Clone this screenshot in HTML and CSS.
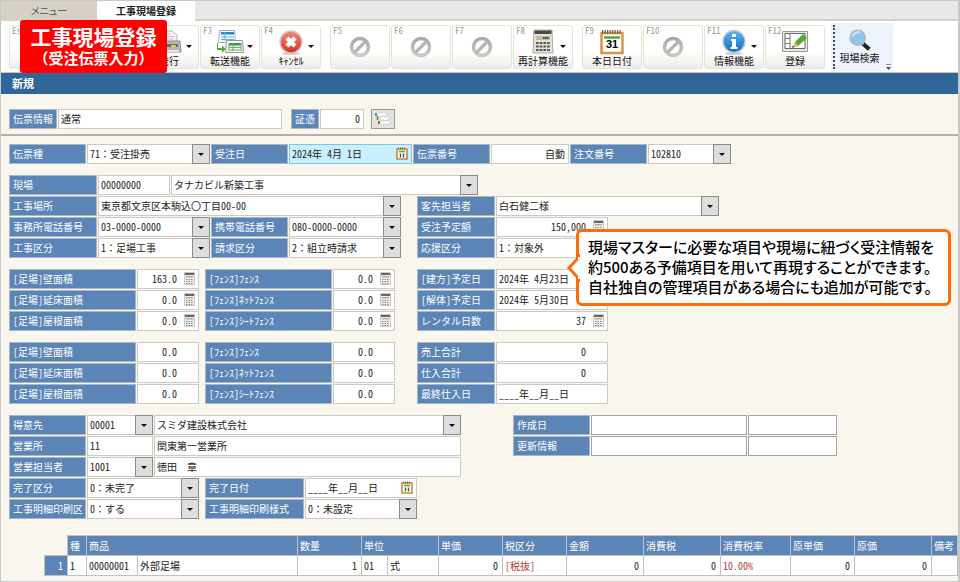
FILE: index.html
```html
<!DOCTYPE html>
<html lang="ja">
<head>
	<meta charset="UTF-8">
	<title>工事現場登録</title>
	<link rel="stylesheet" href="styles.css">
</head>
<body>
<svg class="defs">
	<defs>
		<linearGradient id="g-ban" x1="0" y1="0" x2="0" y2="1"><stop offset="0" stop-color="#a9a9a9"/><stop offset="1" stop-color="#c9c9c9"/></linearGradient>
		<linearGradient id="g-red" x1="0" y1="0" x2="0" y2="1"><stop offset="0" stop-color="#f58a7c"/><stop offset="1" stop-color="#d9301f"/></linearGradient>
		<linearGradient id="g-blue" x1="0" y1="0" x2="0" y2="1"><stop offset="0" stop-color="#5db4ee"/><stop offset="1" stop-color="#1c66bd"/></linearGradient>
	</defs>
	<symbol id="ban" viewBox="0 0 22 22">
		<circle cx="11" cy="11" r="8.5" fill="none" stroke="url(#g-ban)" stroke-width="3.6"/>
		<path d="M5.5 16.5l11-11" stroke="#b5b5b5" stroke-width="3.2"/>
	</symbol>
	<symbol id="calc" viewBox="0 0 11 13">
		<path d="M.5.5h10v12H.5z" fill="#f0efec" stroke="#c9c7c2"/>
		<path d="M1 1h9v2H1z" fill="#666"/>
		<path d="M2 4h7v1.500H2z" fill="#b8ad96"/>
		<path d="M2 7.500h7M2 9.500h7M2 11.500h7" stroke="#888" stroke-dasharray="1.500 1"/>
	</symbol>
	<symbol id="cal" viewBox="0 0 12 13">
		<path d="M1 2h10v10H1z" fill="#fffdf5" stroke="#c8883e" stroke-width="1.600"/>
		<path d="M2 1.500h8" stroke="#7a5a38" stroke-width="2" stroke-dasharray="1 1"/>
		<path d="M3 4.500h6" stroke="#4fae2f" stroke-width="1.600"/>
		<path d="M4.500 6.500v4M7.500 6.500v4" stroke="#555" stroke-width="1.400"/>
	</symbol>
</svg>

<div class="window">
	<div class="tabs">
		<button class="tab">メニュー</button>
		<button class="tab active">工事現場登録</button>
	</div>

	<div class="toolbar">
		<button class="tool"><span class="key">Esc</span></button>
		<button class="tool group" aria-label="F1"></button>
		<button class="tool drop">
			<svg width="26" height="26" viewBox="0 0 26 26"><path d="M6 2h10l5 4v8H6z" fill="#f4f4f4" stroke="#b5b5b5"/><path d="M9 5h6M9 7.500h9M9 10h9" stroke="#c5c5c5"/><path d="M2 12h22l1 11H1z" fill="#b9b9b9" stroke="#8c8c8c"/><path d="M4 15h18v3H4z" fill="#686868"/><path d="M15 17h5" stroke="#e6cf3d" stroke-width="2"/><path d="M3 21h20v2H3z" fill="#e3e3e3"/></svg>
			<span class="cap">発行</span></button>
		<button class="tool drop"><span class="key">F3</span>
			<svg width="28" height="26" viewBox="0 0 28 26"><path d="M3.500 1.500h15l1 12h-17z" fill="#fff" stroke="#8fb0c9"/><path d="M5 3h13v2.500H5z" fill="#2c85c9"/><path d="M5 8h13M5 10.500h13M9 3v9" stroke="#65a8d8"/><path d="M10.500 11.500h16l1 12h-18z" fill="#f5f5f5" stroke="#999"/><path d="M13 14h12v2.500H13z" fill="#3b9d42"/><path d="M13 18.500h12M13 21h12M17 14v8M25 14v8M13 14v8" stroke="#63b567"/><path d="M2 14v5h4v-2.500l4 3.500-4 3.500V21H1v-7z" fill="#4eae2e"/></svg>
			<span class="cap">転送機能</span></button>
		<button class="tool drop"><span class="key">F4</span>
			<svg width="26" height="26" viewBox="0 0 26 26"><ellipse cx="13" cy="24.500" rx="9" ry="1.500" fill="#ccc"/><circle cx="13" cy="13" r="11" fill="url(#g-red)" stroke="#ccc" stroke-width="1.500"/><path d="M9 9l8 8M17 9l-8 8" stroke="#fff" stroke-width="4.500"/></svg>
			<span class="cap">ｷｬﾝｾﾙ</span></button>

		<button class="tool group off"><span class="key">F5</span><svg width="22" height="22"><use href="#ban"/></svg></button>
		<button class="tool off"><span class="key">F6</span><svg width="22" height="22"><use href="#ban"/></svg></button>
		<button class="tool off"><span class="key">F7</span><svg width="22" height="22"><use href="#ban"/></svg></button>
		<button class="tool drop"><span class="key">F8</span>
			<svg width="22" height="26" viewBox="0 0 22 26"><path d="M2 1h18l1 23H1z" fill="#e4e2de" stroke="#aaa"/><path d="M2.500 1.500h17v3.500h-17z" fill="#4a4a4a"/><path d="M4 7h14v4H4z" fill="#c4b799"/><path d="M11 9h6" stroke="#444" stroke-width="2" stroke-dasharray="1.500 .5"/><path d="M4 14h14M4 17.500h14M4 21h14" stroke="#555" stroke-width="2.200" stroke-dasharray="2.700 1"/></svg>
			<span class="cap">再計算機能</span></button>

		<button class="tool group"><span class="key">F9</span>
			<svg width="26" height="26" viewBox="0 0 26 26"><path d="M2.500 4h21v20h-21z" fill="#fff" stroke="#d9954a" stroke-width="2.500"/><path d="M3 3h20" stroke="#7b5937" stroke-width="4" stroke-dasharray="1.200 1.300"/><path d="M5 8.500h16" stroke="#4faa2c" stroke-width="2.500"/><text x="13" y="19" class="day">31</text></svg>
			<span class="cap">本日日付</span></button>
		<button class="tool off"><span class="key">F10</span><svg width="22" height="22"><use href="#ban"/></svg></button>
		<button class="tool drop"><span class="key">F11</span>
			<svg width="26" height="26" viewBox="0 0 26 26"><ellipse cx="13" cy="24.500" rx="9" ry="1.500" fill="#ccc"/><circle cx="13" cy="12.500" r="11" fill="url(#g-blue)" stroke="#bcc9d3" stroke-width="1.500"/><path d="M11 5h4v3h-4zM10 10h5v8h1.500v2h-7v-2H11v-6h-1z" fill="#fff"/></svg>
			<span class="cap">情報機能</span></button>
		<button class="tool"><span class="key">F12</span>
			<svg width="28" height="25" viewBox="0 0 28 25"><path d="M1.500 2.500h25v20h-25z" fill="#e8e8e8" stroke="#999"/><path d="M4 4.500h20v15H4z" fill="#fff" stroke="#666"/><path d="M9 4.500v15M4 9.500h5M4 14.500h5" stroke="#777"/><path d="M12 18l2-5 8-8 4 4-9 8z" fill="#58aa2d"/><path d="M12 18l2-5 3 4z" fill="#e7ba7e"/><path d="M11 19l1-2.500 1.500 1.500z" fill="#333"/></svg>
			<span class="cap">登録</span></button>

		<button class="search">
			<svg width="26" height="26" viewBox="0 0 26 26"><path d="M15 16l8 7" stroke="#222" stroke-width="4.500"/><path d="M14 15l3 3" stroke="#999" stroke-width="2"/><circle cx="10.500" cy="10.500" r="8" fill="#8fc7ec" stroke="#b3b9c0" stroke-width="2"/><path d="M5 9a6 6 0 0 1 8-4" stroke="#d2ebfb" stroke-width="2" fill="none"/></svg>
			<span class="cap">現場検索</span>
			<svg class="more" width="5" height="6" viewBox="0 0 5 6"><path d="M0 .5h5" stroke="#999"/><path d="M0 3h5L2.500 6z" fill="#555"/></svg>
		</button>
	</div>

	<h1 class="title">新規</h1>

	<form>
		<div class="row info">
			<label class="w-info" for="slip">伝票情報</label>
			<input class="w-slip" id="slip" value="通常">
			<label class="w-proof next" for="proof">証憑</label>
			<input class="w-count num" id="proof" value="0">
			<button type="button" class="attach" aria-label="証憑">
				<svg width="16" height="14" viewBox="0 0 16 14"><path d="M2 1h9v3H2zM5 5h9v3H5zM5 9h10v3H5z" fill="#fff" stroke="#ccc" stroke-width=".6"/><path d="M1 1v3" stroke="#2b76c9" stroke-width="1.500"/><path d="M2.500 4v4" stroke="#3b9c39" stroke-width="1.500"/><path d="M4 9v3" stroke="#e04a36" stroke-width="2"/></svg>
			</button>
		</div>

		<div class="row head">
			<label class="w-name" for="kind">伝票種</label>
			<span class="combo w-kind"><select id="kind"><option>71：受注掛売</option></select></span>
			<label class="w-name" for="odate">受注日</label>
			<span class="pick w-kind now"><input id="odate" value="2024年 4月 1日"><svg width="12" height="13"><use href="#cal"/></svg></span>
			<label class="w-name" for="sno">伝票番号</label>
			<input class="w-sno num-edge" id="sno" value="自動">
			<label class="w-name" for="ono">注文番号</label>
			<span class="combo w-ono"><select id="ono"><option>102810</option></select></span>
		</div>

		<div class="block">
			<div class="row">
				<label class="w-site" for="site">現場</label>
				<input class="w-code" id="site" value="00000000">
				<span class="combo w-wide"><select aria-label="現場名"><option>タナカビル新築工事</option></select></span>
			</div>
			<div class="row">
				<label class="w-site" for="place">工事場所</label>
				<span class="combo w-place"><select id="place"><option>東京都文京区本駒込〇丁目00-00</option></select></span>
				<label class="w-right third" for="cust">客先担当者</label>
				<span class="combo w-cust"><select id="cust"><option>白石健二様</option></select></span>
			</div>
			<div class="row">
				<label class="w-site" for="tel">事務所電話番号</label>
				<span class="combo w-field"><select id="tel"><option>03-0000-0000</option></select></span>
				<label class="w-name" for="mobile">携帯電話番号</label>
				<span class="combo w-field"><select id="mobile"><option>080-0000-0000</option></select></span>
				<label class="w-right third" for="amount">受注予定額</label>
				<span class="pick w-field"><input class="num" id="amount" value="150,000"><svg width="11" height="13"><use href="#calc"/></svg></span>
			</div>
			<div class="row">
				<label class="w-site" for="work">工事区分</label>
				<span class="combo w-field"><select id="work"><option>1：足場工事</option></select></span>
				<label class="w-name" for="bill">請求区分</label>
				<span class="combo w-field"><select id="bill"><option>2：組立時請求</option></select></span>
				<label class="w-right third" for="help">応援区分</label>
				<span class="combo w-field"><select id="help"><option>1：対象外</option></select></span>
			</div>
		</div>

		<div class="block">
			<div class="row">
				<label class="w-area" for="a1">[足場]壁面積</label>
				<span class="pick w-val"><input class="num" id="a1" value="163.0"><svg width="11" height="13"><use href="#calc"/></svg></span>
				<label class="w-area second" for="f1">[ﾌｪﾝｽ]ﾌｪﾝｽ</label>
				<span class="pick w-val"><input class="num" id="f1" value="0.0"><svg width="11" height="13"><use href="#calc"/></svg></span>
				<label class="w-right fourth" for="d1">[建方]予定日</label>
				<span class="pick w-field"><input id="d1" value="2024年 4月23日"><svg width="12" height="13"><use href="#cal"/></svg></span>
			</div>
			<div class="row">
				<label class="w-area" for="a2">[足場]延床面積</label>
				<span class="pick w-val"><input class="num" id="a2" value="0.0"><svg width="11" height="13"><use href="#calc"/></svg></span>
				<label class="w-area second" for="f2">[ﾌｪﾝｽ]ﾈｯﾄﾌｪﾝｽ</label>
				<span class="pick w-val"><input class="num" id="f2" value="0.0"><svg width="11" height="13"><use href="#calc"/></svg></span>
				<label class="w-right fourth" for="d2">[解体]予定日</label>
				<span class="pick w-field"><input id="d2" value="2024年 5月30日"><svg width="12" height="13"><use href="#cal"/></svg></span>
			</div>
			<div class="row">
				<label class="w-area" for="a3">[足場]屋根面積</label>
				<span class="pick w-val"><input class="num" id="a3" value="0.0"><svg width="11" height="13"><use href="#calc"/></svg></span>
				<label class="w-area second" for="f3">[ﾌｪﾝｽ]ｼｰﾄﾌｪﾝｽ</label>
				<span class="pick w-val"><input class="num" id="f3" value="0.0"><svg width="11" height="13"><use href="#calc"/></svg></span>
				<label class="w-right fourth" for="days">レンタル日数</label>
				<span class="pick w-field"><input class="num" id="days" value="37"><svg width="11" height="13"><use href="#calc"/></svg></span>
			</div>
		</div>

		<div class="block">
			<div class="row">
				<label class="w-area" for="b1">[足場]壁面積</label>
				<input class="w-val num" id="b1" value="0.0">
				<label class="w-area second" for="g1">[ﾌｪﾝｽ]ﾌｪﾝｽ</label>
				<input class="w-val num" id="g1" value="0.0">
				<label class="w-right fourth" for="sales">売上合計</label>
				<input class="w-field num" id="sales" value="0">
			</div>
			<div class="row">
				<label class="w-area" for="b2">[足場]延床面積</label>
				<input class="w-val num" id="b2" value="0.0">
				<label class="w-area second" for="g2">[ﾌｪﾝｽ]ﾈｯﾄﾌｪﾝｽ</label>
				<input class="w-val num" id="g2" value="0.0">
				<label class="w-right fourth" for="cost">仕入合計</label>
				<input class="w-field num" id="cost" value="0">
			</div>
			<div class="row">
				<label class="w-area" for="b3">[足場]屋根面積</label>
				<input class="w-val num" id="b3" value="0.0">
				<label class="w-area second" for="g3">[ﾌｪﾝｽ]ｼｰﾄﾌｪﾝｽ</label>
				<input class="w-val num" id="g3" value="0.0">
				<label class="w-right fourth" for="last">最終仕入日</label>
				<input class="w-field" id="last" value="____年__月__日">
			</div>
		</div>

		<div class="block">
			<div class="row">
				<label class="w-name" for="client">得意先</label>
				<span class="combo w-short"><select id="client"><option>00001</option></select></span>
				<span class="combo w-wide"><select aria-label="得意先名"><option>スミダ建設株式会社</option></select></span>
				<label class="w-name log" for="made">作成日</label>
				<input class="w-log dark" id="made">
				<input class="w-user dark" aria-label="作成者">
			</div>
			<div class="row">
				<label class="w-name" for="office">営業所</label>
				<input class="w-short" id="office" value="11">
				<input class="w-wide" aria-label="営業所名" value="関東第一営業所">
				<label class="w-name log" for="upd">更新情報</label>
				<input class="w-log dark" id="upd">
				<input class="w-user dark" aria-label="更新者">
			</div>
			<div class="row">
				<label class="w-name" for="rep">営業担当者</label>
				<span class="combo w-short"><select id="rep"><option>1001</option></select></span>
				<input class="w-wide" aria-label="営業担当者名" value="徳田　章">
			</div>
			<div class="row">
				<label class="w-name" for="done">完了区分</label>
				<span class="combo w-field"><select id="done"><option>0：未完了</option></select></span>
				<label class="w-style second" for="ddate">完了日付</label>
				<span class="pick w-field"><input id="ddate" value="____年__月__日"><svg width="12" height="13"><use href="#cal"/></svg></span>
			</div>
			<div class="row">
				<label class="w-name" for="print">工事明細印刷区</label>
				<span class="combo w-field"><select id="print"><option>0：する</option></select></span>
				<label class="w-style second" for="style">工事明細印刷様式</label>
				<span class="combo w-field"><select id="style"><option>0：未設定</option></select></span>
			</div>
		</div>
	</form>

	<table class="items">
		<colgroup>
			<col class="c-no"><col class="c-kind"><col class="c-code"><col class="c-goods"><col class="c-num"><col class="c-ucode"><col class="c-unit"><col class="c-num"><col class="c-num"><col class="c-sum"><col class="c-sum"><col class="c-rate"><col class="c-num"><col class="c-sum"><col>
		</colgroup>
		<thead>
			<tr>
				<td class="none"></td>
				<th>種</th>
				<th colspan="2">商品</th>
				<th>数量</th>
				<th colspan="2">単位</th>
				<th>単価</th>
				<th>税区分</th>
				<th>金額</th>
				<th>消費税</th>
				<th>消費税率</th>
				<th>原単価</th>
				<th>原価</th>
				<th>備考</th>
			</tr>
		</thead>
		<tbody>
			<tr>
				<th class="r">1</th>
				<td>1</td>
				<td>00000001</td>
				<td>外部足場</td>
				<td class="r">1</td>
				<td>01</td>
				<td>式</td>
				<td class="r">0</td>
				<td class="red">[税抜]</td>
				<td class="r">0</td>
				<td class="r">0</td>
				<td class="red">10.00%</td>
				<td class="r">0</td>
				<td class="r">0</td>
				<td></td>
			</tr>
		</tbody>
	</table>

	<div class="badge">
		<strong>工事現場登録</strong>
		<span>（受注伝票入力）</span>
	</div>

	<div class="callout">
		<svg width="14" height="28" viewBox="0 0 14 28"><path d="M14 0v2L3 14l11 12v2" fill="#fff" stroke="#ff6a0a" stroke-width="3"/><path d="M12 3h2v22h-2z" fill="#fff"/></svg>
		現場マスターに必要な項目や現場に紐づく受注情報を<br>
		約500ある予備項目を用いて再現することができます。<br>
		自社独自の管理項目がある場合にも追加が可能です。
	</div>
</div>
</body>
</html>
```
FILE: styles.css
```css
*, *::before{
	box-sizing: border-box;
	margin: 0;
	padding: 0;
}
body{
	font: 10px/18px "Noto Sans Mono CJK JP", "Noto Sans CJK JP", sans-serif;
	color: #222;
	background: #f9f6ee;
}
button, input, select{
	font: inherit;
	color: inherit;
}
.defs{
	position: absolute;
	width: 0;
	height: 0;
}
.window{
	position: relative;
	min-height: 100vh;
	border: 1px solid #c8c8c8;
	border-right-width: 2px;
	overflow: hidden;
}

/* タブ */
.tabs{
	display: flex;
	height: 20px;
	background: #e8e8e8;
	border-bottom: 2px solid #d6d0c5;
}
.tab{
	width: 96px;
	height: 20px;
	border: 0;
	background: #d6d0c5;
	color: #555;
	font-family: "Noto Sans CJK JP", sans-serif;
	font-feature-settings: "palt";
}
.tab.active{
	width: 98px;
	background: #fff;
	color: #222;
	font-weight: bold;
}

/* ツールバー */
.toolbar{
	display: flex;
	align-items: center;
	gap: 1px;
	height: 52px;
	padding-left: 8px;
	background: #fff;
	border-bottom: 1px solid #c9c5bb;
}
.tool{
	position: relative;
	display: flex;
	flex-direction: column;
	align-items: center;
	flex: none;
	width: 60px;
	height: 44px;
	padding: 3px 0 1px;
	border: 1px solid #dfe8d2;
	border-radius: 3px;
	background: linear-gradient(#fff 60%, #eeece5);
}
.tool.group{
	margin-left: 8px;
}
.tool.off{
	padding-top: 10px;
}
.tool svg{
	flex: none;
}
.key{
	position: absolute;
	left: 2px;
	top: 0;
	font-size: 9px;
	line-height: 10px;
	color: #999;
}
.cap{
	margin-top: auto;
	line-height: 12px;
	font-weight: 500;
	white-space: nowrap;
	color: #111;
}
.drop::after{
	content: "";
	position: absolute;
	right: 6px;
	top: 19px;
	border: 3px solid transparent;
	border-top-color: #111;
}
.day{
	font: bold 11px "Liberation Sans", sans-serif;
	text-anchor: middle;
}
.search{
	position: relative;
	display: flex;
	flex-direction: column;
	align-items: center;
	width: 62px;
	height: 48px;
	margin-left: 5px;
	padding: 5px 5px 7px 0;
	border: 0;
	background: #edf3fc;
}
.search::before{
	content: "";
	position: absolute;
	left: 2px;
	top: 2px;
	bottom: 2px;
	border-left: 2px dotted #444;
}
.more{
	position: absolute;
	right: 2px;
	bottom: 1px;
}
.title{
	height: 21px;
	padding-left: 11px;
	background: #316598;
	color: #fff;
	font-size: 11px;
	line-height: 20px;
}

/* 入力欄 */
.row{
	display: flex;
	gap: 1px;
	height: 20px;
	margin-bottom: 1px;
	padding-left: 8px;
}
.row > *{
	flex: none;
	height: 20px;
}
.info{
	height: 42px;
	margin: 0;
	padding-top: 15px;
	border-bottom: 2px solid #b3b1ab;
}
.head{
	margin: 8px 0 11px;
}
.block{
	margin-bottom: 11px;
}
label{
	padding-left: 3px;
	border: 1px solid #a9b6c6;
	background: #5b84b7;
	color: #fff;
	white-space: nowrap;
	overflow: hidden;
}
input, select{
	height: 20px;
	padding: 0 3px 1px 2px;
	border: 1px solid #cbcac6;
	border-radius: 0;
	background: #fff;
	outline: 0;
}
select{
	appearance: none;
}
.combo, .pick{
	position: relative;
}
.combo select, .pick input{
	display: block;
	width: 100%;
}
.combo::before{
	content: "";
	position: absolute;
	right: 0;
	top: 0;
	width: 18px;
	height: 20px;
	border: 1px solid #8b8b8b;
	background: #dedede;
	pointer-events: none;
}
.combo::after{
	content: "";
	position: absolute;
	right: 6px;
	top: 9px;
	border: 3px solid transparent;
	border-top-color: #111;
	pointer-events: none;
}
.pick svg{
	position: absolute;
	right: 4px;
	top: 3px;
}
.num{
	padding-right: 21px;
	text-align: right;
}
.w-count.num, .num-edge{
	padding-right: 3px;
	text-align: right;
}
.now input{
	background: #c8f1ff;
	border-color: #8cc0e0;
}
.dark{
	border-color: #a5a5a5;
}
.attach{
	width: 24px;
	margin-left: 6px;
	padding: 2px 3px 0;
	border: 1px solid #999;
	background: #e2e2e2;
}
.next{ margin-left: 8px; }
.second{ margin-left: 5px; }
.third{ margin-left: 15px; }
.fourth{ margin-left: 21px; }
.log{ margin-left: 51px; }

.w-info{ width: 48px; }
.w-slip{ width: 224px; }
.w-proof{ width: 28px; }
.w-count{ width: 44px; }
.w-name{ width: 77px; }
.w-kind{ width: 123px; }
.w-sno{ width: 78px; }
.w-ono{ width: 83px; }
.w-site{ width: 88px; }
.w-code{ width: 72px; }
.w-wide{ width: 307px; }
.w-place{ width: 303px; }
.w-right{ width: 78px; }
.w-cust{ width: 223px; }
.w-field{ width: 112px; }
.w-area{ width: 127px; }
.w-val{ width: 62px; }
.w-short{ width: 66px; }
.w-log{ width: 156px; }
.w-user{ width: 89px; }
.w-style{ width: 99px; }

/* 明細 */
.items{
	width: calc(100% - 43px);
	margin: 16px 0 5px 43px;
	border-collapse: collapse;
	table-layout: fixed;
}
.items th, .items td{
	height: 20px;
	padding: 0 2px;
	border: 1px solid #c3c1bc;
	background: #fff;
	text-align: left;
	white-space: nowrap;
}
.items th{
	background: #5b84b7;
	color: #fff;
	font-weight: normal;
}
.items .none{
	background: none;
	border-top-color: transparent;
	border-left-color: transparent;
}
.items .r{
	padding-right: 4px;
	text-align: right;
}
.items .red{
	color: #b23c3c;
}
.c-no{ width: 23px; }
.c-kind{ width: 19px; }
.c-code{ width: 51px; }
.c-goods{ width: 160px; }
.c-num{ width: 64px; }
.c-ucode{ width: 26px; }
.c-unit{ width: 51px; }
.c-sum{ width: 77px; }
.c-rate{ width: 70px; }

/* 説明 */
.badge{
	position: absolute;
	left: 19px;
	top: 19px;
	width: 147px;
	height: 53px;
	padding-top: 4px;
	border-radius: 3px;
	background: #f00;
	color: #fff;
	font-weight: bold;
	text-align: center;
}
.badge strong, .badge span{
	display: block;
	font-size: 21px;
	line-height: 24px;
}
.badge span{
	font-size: 15px;
	line-height: 20px;
}
.callout{
	position: absolute;
	right: 7px;
	top: 228px;
	width: 375px;
	padding: 5px 9px 6px;
	border: 3px solid #ff6a0a;
	border-radius: 6px;
	background: #fff;
	color: #000;
	font-family: "Noto Sans CJK JP", sans-serif;
	font-size: 15px;
	line-height: 20px;
	font-weight: 500;
	font-feature-settings: "palt";
	white-space: nowrap;
}
.callout svg{
	position: absolute;
	left: -13px;
	top: 22px;
}
```
